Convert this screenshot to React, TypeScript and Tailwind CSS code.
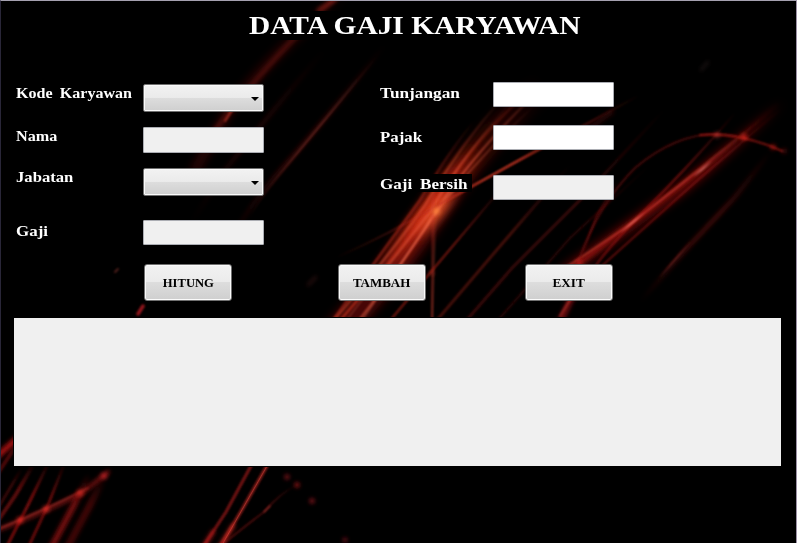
import React from "react";

type Streak = { d: string; c: string; w: number; o: number; b?: "a" | "b" | "c"; f?: "both" | "top" | "none" };

const streaks: Streak[] = [
  // upper left band
  { d: "M352 -12 Q280 45 232 105 L195 170", c: "#8c1010", w: 8, o: 0.35, b: "c" },
  { d: "M340 -6 Q285 42 215 130", c: "#981a18", w: 4, o: 0.42, b: "b", f: "none" },
  { d: "M335 0 L318 10", c: "#d03028", w: 3, o: 0.55, b: "b", f: "none" },
  { d: "M232 110 L225 121", c: "#e04030", w: 2, o: 0.6, b: "a", f: "none" },
  { d: "M325 50 Q285 95 225 170 L190 225", c: "#5c0c0c", w: 4, o: 0.35, b: "b", f: "both" },
  { d: "M385 45 Q325 120 285 165 T225 250", c: "#6a1010", w: 4, o: 0.5, b: "b", f: "both" },
  { d: "M378 55 Q325 120 285 168 T252 222", c: "#b04438", w: 1.2, o: 0.55, b: "a", f: "both" },
  // bright central bundle
  { d: "M545 85 Q480 140 435 210 Q395 270 335 335", c: "#8d0d07", w: 28, o: 0.5, b: "c" },
  { d: "M480 145 Q440 190 375 285", c: "#f03516", w: 19, o: 0.7, b: "c", f: "both" },
  { d: "M458 185 L415 238", c: "#ff6a35", w: 13, o: 0.65, b: "c", f: "both" },
  { d: "M537 85 Q480 130 435 203 Q400 252 336 325", c: "#d83a20", w: 3, o: 0.55, b: "a" },
  { d: "M505 95 Q460 145 425 205 Q390 255 330 325", c: "#ff6038", w: 2, o: 0.5, b: "a" },
  { d: "M550 80 Q480 145 440 205 Q405 262 355 325", c: "#ff684a", w: 1.8, o: 0.6, b: "a" },
  { d: "M475 120 Q450 150 420 200 L333 320", c: "#bd2a1b", w: 2.5, o: 0.6, b: "a" },
  { d: "M535 105 Q475 160 432 218 L362 320", c: "#ff7a58", w: 1.2, o: 0.6, b: "a" },
  { d: "M520 92 Q462 155 430 212 L345 322", c: "#ff8a68", w: 1, o: 0.5, b: "a" },
  { d: "M640 95 Q510 165 438 205 Q390 234 335 258", c: "#b8291b", w: 2, o: 0.8, b: "a", f: "both" },
  { d: "M555 140 Q500 170 440 205", c: "#e84a34", w: 1.5, o: 0.6, b: "a", f: "both" },
  { d: "M438 170 L433 200 L432 320 L431 330", c: "#c63427", w: 2, o: 0.45, b: "a" },
  { d: "M437 195 Q434 245 432 330", c: "#ef6047", w: 0.8, o: 0.5, b: "a" },
  { d: "M506 183 L430 273 L372 342", c: "#a62018", w: 2, o: 0.7, b: "a" },
  { d: "M570 165 L495 252 L420 340", c: "#701711", w: 3, o: 0.6, b: "a" },
  { d: "M664 110 L585 195 L512 268 L445 345", c: "#5a0d0d", w: 3, o: 0.6, b: "a" },
  { d: "M650 165 L570 238 L485 335", c: "#500808", w: 2, o: 0.55, b: "a" },
  { d: "M618 180 L597 215 L577 268", c: "#831111", w: 2, o: 0.55, b: "a", f: "both" },
  // right bundle
  { d: "M785 100 Q735 145 680 190 L565 272", c: "#a80d0d", w: 11, o: 0.55, b: "c" },
  { d: "M780 102 Q735 143 690 178 L560 278", c: "#e02018", w: 2.5, o: 0.7, b: "b" },
  { d: "M760 120 L680 185 L625 228 L565 268", c: "#e84c3c", w: 1.5, o: 0.7, b: "a" },
  { d: "M736 112 Q690 165 650 205 T594 268", c: "#b01917", w: 2, o: 0.6, b: "a" },
  { d: "M782 108 L700 178 L595 272", c: "#9f1412", w: 2, o: 0.6, b: "a" },
  { d: "M712 161 L693 177", c: "#ffa090", w: 1.2, o: 0.8, b: "a", f: "both" },
  { d: "M645 212 L620 233", c: "#ff8a78", w: 1.5, o: 0.8, b: "a", f: "both" },
  { d: "M578 262 Q598 205 635 168 Q685 126 736 136", c: "#751010", w: 2, o: 0.6, b: "a", f: "none" },
  { d: "M700 135 Q740 132 782 151", c: "#b01a14", w: 2.2, o: 0.65, b: "a", f: "none" },
  { d: "M772 150 L735 197 L690 245 L640 302", c: "#7f1211", w: 4, o: 0.55, b: "b", f: "both" },
  { d: "M692 240 L658 279", c: "#bb3b35", w: 1.2, o: 0.65, b: "a", f: "both" },
  { d: "M573 295 L560 322", c: "#c5161a", w: 6, o: 0.55, b: "b", f: "none" },
  { d: "M571 298 L560 316", c: "#e84538", w: 2, o: 0.5, b: "a", f: "none" },
  { d: "M708 62 L701 70", c: "#453030", w: 2.5, o: 0.45, b: "b", f: "none" },
  { d: "M612 112 L590 128", c: "#5c1010", w: 4, o: 0.5, b: "b", f: "none" },
  // small isolated marks
  { d: "M316 277 L308 285", c: "#6d2828", w: 2.5, o: 0.4, b: "b", f: "none" },
  { d: "M143 306 L138 314", c: "#d52029", w: 3.5, o: 0.7, b: "a", f: "none" },
  { d: "M118 269 L115 272", c: "#8a3530", w: 2, o: 0.6, b: "a", f: "none" },
  // lower left bundle
  { d: "M18 438 L-5 458", c: "#e81515", w: 6, o: 0.7, b: "b", f: "none" },
  { d: "M-4 476 L20 440", c: "#940d0d", w: 4, o: 0.5, b: "a" },
  { d: "M106 474 L90 505 L66 550", c: "#a00f0f", w: 7, o: 0.4, b: "b" },
  { d: "M108 472 L82 493 Q45 512 -5 531", c: "#c01c1c", w: 4, o: 0.6, b: "b", f: "none" },
  { d: "M88 488 Q45 510 -4 530", c: "#f04b40", w: 1.2, o: 0.6, b: "a", f: "none" },
  { d: "M90 475 L74 505 L50 550", c: "#b51414", w: 6, o: 0.65, b: "b" },
  { d: "M66 460 L48 505 L27 550", c: "#981010", w: 3, o: 0.65, b: "a" },
  { d: "M50 460 L28 505 L5 550", c: "#ae1313", w: 3, o: 0.65, b: "a" },
  { d: "M35 462 L15 496 L-5 525", c: "#a01212", w: 4, o: 0.55, b: "a" },
  { d: "M22 468 L-3 510", c: "#6c0a0a", w: 3, o: 0.5, b: "a" },
  // lower middle pair
  { d: "M252 464 L226 512 L201 550", c: "#a91b1b", w: 3, o: 0.7, b: "a", f: "none" },
  { d: "M268 464 L243 508 L218 550", c: "#b82520", w: 3.5, o: 0.7, b: "a", f: "none" },
  { d: "M213 532 L203 548", c: "#d01c1c", w: 5, o: 0.5, b: "b", f: "none" },
  { d: "M233 526 L219 548", c: "#e02a24", w: 5, o: 0.5, b: "b", f: "none" },
  { d: "M267 466 L243 508 L222 545", c: "#ff6657", w: 0.8, o: 0.4, f: "none" },
  { d: "M297 485 Q280 493 264 512 Q245 526 222 545", c: "#971919", w: 1.5, o: 0.6, b: "a" },
  { d: "M270 506 L264 512", c: "#c04038", w: 1.2, o: 0.7, b: "a", f: "none" },
];

const sparks = [
  { x: 436, y: 211, r: 3.5, c: "#ff9040" }, { x: 744, y: 137, r: 3, c: "#ff3026" },
  { x: 717, y: 135, r: 2.5, c: "#d9453f" }, { x: 773, y: 147, r: 2.5, c: "#c91a17" },
  { x: 784, y: 151, r: 2, c: "#a01815" },
  { x: 579, y: 262, r: 2.5, c: "#df2721" }, { x: 432, y: 273, r: 2, c: "#c43228" },
  { x: 104, y: 476, r: 3, c: "#e72c32" }, { x: 46, y: 509, r: 3, c: "#ff3a32" },
  { x: 20, y: 520, r: 3, c: "#ff3128" }, { x: 80, y: 493, r: 3, c: "#ef3028" },
  { x: 287, y: 477, r: 2.4, c: "#c5202a" }, { x: 297, y: 485, r: 2.4, c: "#e82023" },
  { x: 312, y: 501, r: 2.4, c: "#d0202b" }, { x: 345, y: 540, r: 2.2, c: "#b01828" },
];

function Backdrop() {
  return (
    <svg className="absolute inset-0" width="797" height="543" viewBox="0 0 797 543" fill="none" aria-hidden="true">
      <defs>
        <filter id="a" filterUnits="userSpaceOnUse" x="-20" y="-20" width="840" height="590"><feGaussianBlur stdDeviation="0.8" /></filter>
        <filter id="b" filterUnits="userSpaceOnUse" x="-20" y="-20" width="840" height="590"><feGaussianBlur stdDeviation="2" /></filter>
        <filter id="c" filterUnits="userSpaceOnUse" x="-20" y="-20" width="840" height="590"><feGaussianBlur stdDeviation="5" /></filter>
        {streaks.map((s, i) => (
          <linearGradient key={i} id={`g${i}`} x1="0" y1="1" x2="1" y2="0">
            <stop offset="0" stopColor={s.c} stopOpacity={s.f === "both" ? 0 : 1} />
            <stop offset="0.4" stopColor={s.c} />
            <stop offset="0.6" stopColor={s.c} />
            <stop offset="1" stopColor={s.c} stopOpacity="0" />
          </linearGradient>
        ))}
      </defs>
      {streaks.map((s, i) => (
        <path key={i} d={s.d} stroke={s.f === "none" ? s.c : `url(#g${i})`} strokeWidth={s.w} opacity={s.o} strokeLinecap="round" filter={s.b ? `url(#${s.b})` : undefined} />
      ))}
      {sparks.map((s, i) => (
        <circle key={i} cx={s.x} cy={s.y} r={s.r} fill={s.c} opacity="0.75" filter="url(#b)" />
      ))}
    </svg>
  );
}

function Label({ text, className, stretch }: { text: string; className: string; stretch: string }) {
  return (
    <div className={`h-[18px] shrink-0 whitespace-nowrap bg-black text-[15px] font-bold leading-[18px] text-white ${className}`}>
      <span className={`inline-block origin-left ${stretch}`}>{text}</span>
    </div>
  );
}

function Combo({ className }: { className: string }) {
  return (
    <button aria-label="combo" className={`flex h-7 w-[121px] items-center justify-end rounded-[2px] border border-[#707070] bg-[linear-gradient(#f2f2f2_0%,#ebebeb_48%,#dddddd_50%,#cfcfcf_100%)] pr-1 pt-px shadow-[inset_0_0_0_1px_#fafafa] ${className}`}>
      <svg width="8" height="4" viewBox="0 0 8 4"><path d="M0 0h8L4 4z" fill="#000" /></svg>
    </button>
  );
}

function Field({ className }: { className: string }) {
  return <input className={`block w-[121px] rounded-[1px] border border-[#abadb3] outline-none ${className}`} />;
}

function Action({ text, className }: { text: string; className: string }) {
  return (
    <button className="flex h-[37px] w-[88px] items-center justify-center rounded-[3px] border border-[#707070] bg-[linear-gradient(#f2f2f2_0%,#ebebeb_48%,#dddddd_50%,#cfcfcf_100%)] text-[12px] font-bold leading-none text-black shadow-[inset_0_0_0_1px_#fafafa]">
      <span className={`inline-block ${className}`}>{text}</span>
    </button>
  );
}

export default function App() {
  return (
    <div className="relative h-[543px] w-[797px] overflow-hidden bg-black font-['Liberation_Serif',serif]">
      <Backdrop />
      <main className="relative h-full border-l border-r border-t border-l-[#292638] border-r-[#9c91a5] border-t-[#a5a1b0]">
        <div className="flex h-[81px] pl-[244px] pt-[10px]">
          <h1 className="h-[29px] w-[340px] whitespace-nowrap bg-black pl-1 text-[26px] font-bold leading-[29px] text-white">
            <span className="inline-block origin-left scale-x-[1.13]">DATA GAJI KARYAWAN</span>
          </h1>
        </div>
        <form className="flex h-[182px] pl-[15px]" onSubmit={(e) => e.preventDefault()}>
          <div className="w-[127px] pt-[2px]">
            <Label text="Kode Karyawan" className="w-[120px]" stretch="scale-x-[1.07] [word-spacing:3px]" />
            <Label text="Nama" className="mt-[25px] w-[46px]" stretch="scale-x-[1.08]" />
            <Label text="Jabatan" className="mt-[23px] w-[62px]" stretch="scale-x-[1.11]" />
            <Label text="Gaji" className="mt-[36px] w-[38px]" stretch="scale-x-[1.13]" />
          </div>
          <div className="w-[237px] pt-[2px]">
            <Combo className="" />
            <Field className="mt-[15px] h-[26px] bg-[#f0f0f0]" />
            <Combo className="mt-[15px]" />
            <Field className="mt-[24px] h-[25px] bg-[#f0f0f0]" />
          </div>
          <div className="w-[113px] pt-[2px]">
            <Label text="Tunjangan" className="w-[86px]" stretch="scale-x-[1.15]" />
            <Label text="Pajak" className="mt-[26px] w-[48px]" stretch="scale-x-[1.12]" />
            <Label text="Gaji Bersih" className="mt-[28px] w-[92px] pt-px" stretch="scale-x-[1.14] [word-spacing:3px]" />
          </div>
          <div>
            <Field className="h-[25px] bg-white" />
            <Field className="mt-[18px] h-[25px] bg-white" />
            <Field className="mt-[25px] h-[25px] bg-[#f0f0f0]" />
          </div>
        </form>
        <div className="flex h-[54px] pl-[143px]">
          <Action text="HITUNG" className="scale-x-[1.05]" />
          <div className="ml-[106px]"><Action text="TAMBAH" className="scale-x-[1.08]" /></div>
          <div className="ml-[99px]"><Action text="EXIT" className="scale-x-[1.1]" /></div>
        </div>
        <section className="ml-[13px] h-[148px] w-[767px] bg-[#f0f0f0] shadow-[0_0_0_1px_#000]" />
      </main>
    </div>
  );
}
